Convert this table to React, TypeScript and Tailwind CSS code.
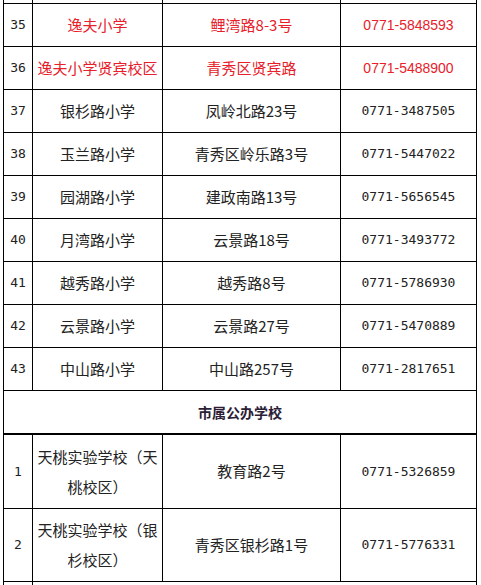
const cjk = "font-['Noto_Sans_CJK_SC','Noto_Sans',sans-serif]";
const mono = "font-['DejaVu_Sans_Mono','Noto_Sans_CJK_SC',monospace]";

type Row = { no: string; name: string; addr: string; tel: string; red?: boolean };

const rows: Row[] = [
  { no: "35", name: "逸夫小学", addr: "鲤湾路8-3号", tel: "0771-5848593", red: true },
  { no: "36", name: "逸夫小学贤宾校区", addr: "青秀区贤宾路", tel: "0771-5488900", red: true },
  { no: "37", name: "银杉路小学", addr: "凤岭北路23号", tel: "0771-3487505" },
  { no: "38", name: "玉兰路小学", addr: "青秀区岭乐路3号", tel: "0771-5447022" },
  { no: "39", name: "园湖路小学", addr: "建政南路13号", tel: "0771-5656545" },
  { no: "40", name: "月湾路小学", addr: "云景路18号", tel: "0771-3493772" },
  { no: "41", name: "越秀路小学", addr: "越秀路8号", tel: "0771-5786930" },
  { no: "42", name: "云景路小学", addr: "云景路27号", tel: "0771-5470889" },
  { no: "43", name: "中山路小学", addr: "中山路257号", tel: "0771-2817651" },
];

const cityRows: Row[] = [
  { no: "1", name: "天桃实验学校（天桃校区）", addr: "教育路2号", tel: "0771-5326859" },
  { no: "2", name: "天桃实验学校（银杉校区）", addr: "青秀区银杉路1号", tel: "0771-5776331" },
];

function Cells({ row }: { row: Row }) {
  const text = row.red ? "text-[#e8202a]" : "text-[#222]";
  return (
    <>
      <div className={`w-[29px] shrink-0 border-r border-black flex items-center justify-center text-[13px] text-[#222] ${mono}`}>
        {row.no}
      </div>
      <div className={`w-[130px] shrink-0 border-r border-black flex items-center justify-center px-[3px] text-[15px] leading-[30px] ${text} ${cjk}`}>
        <div className="w-full text-center">{row.name}</div>
      </div>
      <div className={`w-[178px] shrink-0 border-r border-black flex items-center justify-center text-[15px] ${text} ${cjk}`}>
        {row.addr}
      </div>
      <div
        className={`flex-1 flex items-center justify-center ${
          row.red
            ? "text-[14px] text-[#e8202a] font-['Liberation_Sans',sans-serif]"
            : `text-[13px] text-[#222] ${mono}`
        }`}
      >
        {row.tel}
      </div>
    </>
  );
}

export default function App() {
  return (
    <div className="w-[481px] h-[585px] overflow-hidden bg-white">
      <div className="ml-[3px] w-[474px] border-x border-black">
        {/* tail of the row above */}
        <div className="flex h-[4px] border-b border-black">
          <div className="w-[29px] border-r border-black" />
          <div className="w-[130px] border-r border-black" />
          <div className="w-[178px] border-r border-black" />
          <div className="flex-1" />
        </div>

        {rows.map((row) => (
          <div key={row.no} className="flex h-[43px] border-b border-black">
            <Cells row={row} />
          </div>
        ))}

        {/* section header */}
        <div className={`flex h-[44px] items-center justify-center border-b-2 border-black text-[14px] font-bold text-[#2b1e36] ${cjk}`}>
          市属公办学校
        </div>

        {cityRows.map((row, i) => (
          <div key={row.no} className={`flex ${i === 0 ? "h-[74px]" : "h-[73px]"} border-b border-black`}>
            <Cells row={row} />
          </div>
        ))}

        <div className="flex h-[10px]">
          <div className="w-[29px] border-r border-black" />
        </div>
      </div>
    </div>
  );
}
